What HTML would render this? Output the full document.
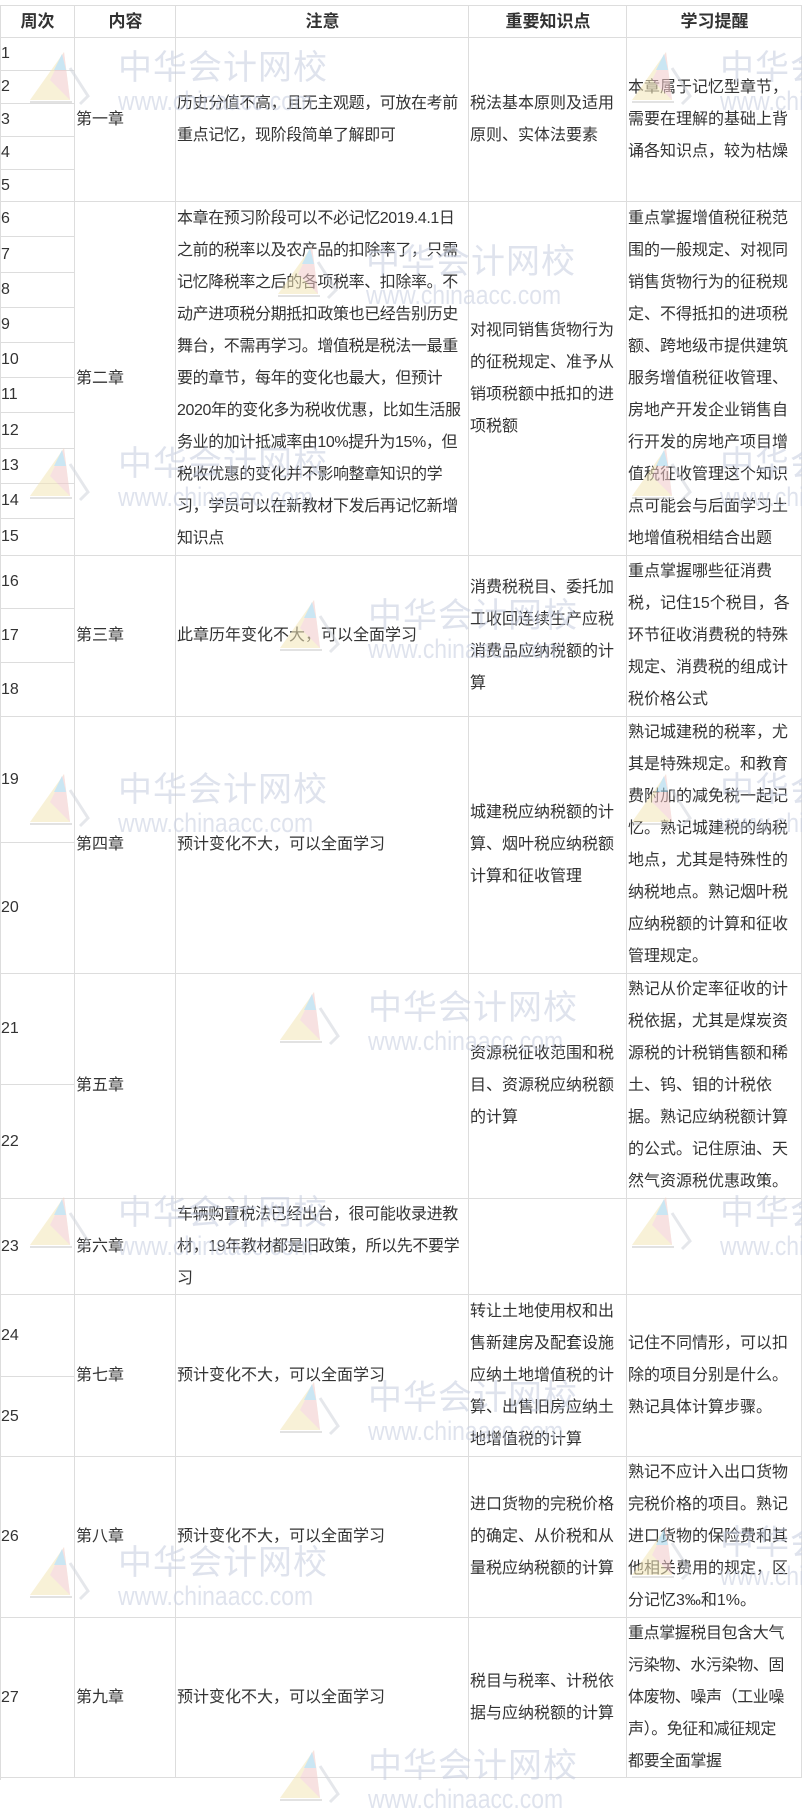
<!DOCTYPE html>
<html><head><meta charset="utf-8"><style>
html,body{margin:0;padding:0;background:#fff;}
body{width:802px;height:1780px;position:relative;overflow:hidden;font-family:"Liberation Sans","Noto Sans CJK SC",sans-serif;color:#333;font-size:16px;}
.c{position:absolute;box-sizing:border-box;border-right:1px solid #ddd;border-bottom:1px solid #ddd;display:flex;align-items:center;line-height:32px;padding-left:1px;}
.h{justify-content:center;font-weight:bold;font-size:17px;}
.t{display:block;}
.nw{white-space:nowrap;letter-spacing:-0.4px;}
.wm{position:absolute;opacity:.55;pointer-events:none;}
.wm .z{position:absolute;left:88px;top:0;font-size:34px;color:#c6cde0;white-space:nowrap;letter-spacing:1px;line-height:36px;}
.wm .u{position:absolute;left:88px;top:36px;font-size:27px;color:#c6cde0;white-space:nowrap;line-height:30px;transform:scaleX(.85);transform-origin:left;}
.wm svg{position:absolute;left:0;top:2px;}
</style></head><body>
<div style="position:absolute;left:0;top:5px;width:802px;height:1px;background:#ddd"></div>
<div style="position:absolute;left:0;top:5px;width:1px;height:1775px;background:#ddd"></div>

<div class="c h" style="left:0;top:6px;width:75px;height:32px">周次</div>
<div class="c h" style="left:75px;top:6px;width:101px;height:32px">内容</div>
<div class="c h" style="left:176px;top:6px;width:293px;height:32px">注意</div>
<div class="c h" style="left:469px;top:6px;width:158px;height:32px">重要知识点</div>
<div class="c h" style="left:627px;top:6px;width:175px;height:32px">学习提醒</div>

<div class="c" style="left:0;top:38px;width:75px;height:33px">1</div>
<div class="c" style="left:0;top:71px;width:75px;height:33px">2</div>
<div class="c" style="left:0;top:104px;width:75px;height:33px">3</div>
<div class="c" style="left:0;top:137px;width:75px;height:33px">4</div>
<div class="c" style="left:0;top:170px;width:75px;height:32px">5</div>
<div class="c" style="left:0;top:202px;width:75px;height:35px">6</div>
<div class="c" style="left:0;top:237px;width:75px;height:36px">7</div>
<div class="c" style="left:0;top:273px;width:75px;height:35px">8</div>
<div class="c" style="left:0;top:308px;width:75px;height:35px">9</div>
<div class="c" style="left:0;top:343px;width:75px;height:35px">10</div>
<div class="c" style="left:0;top:378px;width:75px;height:35px">11</div>
<div class="c" style="left:0;top:413px;width:75px;height:36px">12</div>
<div class="c" style="left:0;top:449px;width:75px;height:35px">13</div>
<div class="c" style="left:0;top:484px;width:75px;height:35px">14</div>
<div class="c" style="left:0;top:519px;width:75px;height:37px">15</div>
<div class="c" style="left:0;top:556px;width:75px;height:53px">16</div>
<div class="c" style="left:0;top:609px;width:75px;height:54px">17</div>
<div class="c" style="left:0;top:663px;width:75px;height:54px">18</div>
<div class="c" style="left:0;top:717px;width:75px;height:126px">19</div>
<div class="c" style="left:0;top:843px;width:75px;height:131px">20</div>
<div class="c" style="left:0;top:974px;width:75px;height:111px">21</div>
<div class="c" style="left:0;top:1085px;width:75px;height:114px">22</div>
<div class="c" style="left:0;top:1199px;width:75px;height:96px">23</div>
<div class="c" style="left:0;top:1295px;width:75px;height:82px">24</div>
<div class="c" style="left:0;top:1377px;width:75px;height:80px">25</div>
<div class="c" style="left:0;top:1457px;width:75px;height:161px">26</div>
<div class="c" style="left:0;top:1618px;width:75px;height:160px">27</div>

<div class="c" style="left:75px;top:38px;width:101px;height:164px">第一章</div>
<div class="c" style="left:176px;top:38px;width:293px;height:164px"><span class="t nw">历史分值不高，且无主观题，可放在考前<br>重点记忆，现阶段简单了解即可</span></div>
<div class="c" style="left:469px;top:38px;width:158px;height:164px"><span class="t">税法基本原则及适用原则、实体法要素</span></div>
<div class="c" style="left:627px;top:38px;width:175px;height:164px"><span class="t">本章属于记忆型章节，需要在理解的基础上背诵各知识点，较为枯燥</span></div>

<div class="c" style="left:75px;top:202px;width:101px;height:354px">第二章</div>
<div class="c" style="left:176px;top:202px;width:293px;height:354px"><span class="t nw">本章在预习阶段可以不必记忆2019.4.1日<br>之前的税率以及农产品的扣除率了，只需<br>记忆降税率之后的各项税率、扣除率。不<br>动产进项税分期抵扣政策也已经告别历史<br>舞台，不需再学习。增值税是税法一最重<br>要的章节，每年的变化也最大，但预计<br>2020年的变化多为税收优惠，比如生活服<br>务业的加计抵减率由10%提升为15%，但<br>税收优惠的变化并不影响整章知识的学<br>习，学员可以在新教材下发后再记忆新增<br>知识点</span></div>
<div class="c" style="left:469px;top:202px;width:158px;height:354px"><span class="t">对视同销售货物行为的征税规定、准予从销项税额中抵扣的进项税额</span></div>
<div class="c" style="left:627px;top:202px;width:175px;height:354px"><span class="t">重点掌握增值税征税范围的一般规定、对视同销售货物行为的征税规定、不得抵扣的进项税额、跨地级市提供建筑服务增值税征收管理、房地产开发企业销售自行开发的房地产项目增值税征收管理这个知识点可能会与后面学习土地增值税相结合出题</span></div>

<div class="c" style="left:75px;top:556px;width:101px;height:161px">第三章</div>
<div class="c" style="left:176px;top:556px;width:293px;height:161px">此章历年变化不大，可以全面学习</div>
<div class="c" style="left:469px;top:556px;width:158px;height:161px"><span class="t">消费税税目、委托加工收回连续生产应税消费品应纳税额的计算</span></div>
<div class="c" style="left:627px;top:556px;width:175px;height:161px"><span class="t">重点掌握哪些征消费税，记住15个税目，各环节征收消费税的特殊规定、消费税的组成计税价格公式</span></div>

<div class="c" style="left:75px;top:717px;width:101px;height:257px">第四章</div>
<div class="c" style="left:176px;top:717px;width:293px;height:257px">预计变化不大，可以全面学习</div>
<div class="c" style="left:469px;top:717px;width:158px;height:257px"><span class="t">城建税应纳税额的计算、烟叶税应纳税额计算和征收管理</span></div>
<div class="c" style="left:627px;top:717px;width:175px;height:257px"><span class="t">熟记城建税的税率，尤其是特殊规定。和教育费附加的减免税一起记忆。熟记城建税的纳税地点，尤其是特殊性的纳税地点。熟记烟叶税应纳税额的计算和征收管理规定。</span></div>

<div class="c" style="left:75px;top:974px;width:101px;height:225px">第五章</div>
<div class="c" style="left:176px;top:974px;width:293px;height:225px"></div>
<div class="c" style="left:469px;top:974px;width:158px;height:225px"><span class="t">资源税征收范围和税目、资源税应纳税额的计算</span></div>
<div class="c" style="left:627px;top:974px;width:175px;height:225px"><span class="t">熟记从价定率征收的计税依据，尤其是煤炭资源税的计税销售额和稀土、钨、钼的计税依据。熟记应纳税额计算的公式。记住原油、天然气资源税优惠政策。</span></div>

<div class="c" style="left:75px;top:1199px;width:101px;height:96px">第六章</div>
<div class="c" style="left:176px;top:1199px;width:293px;height:96px"><span class="t nw">车辆购置税法已经出台，很可能收录进教<br>材，19年教材都是旧政策，所以先不要学<br>习</span></div>
<div class="c" style="left:469px;top:1199px;width:158px;height:96px"></div>
<div class="c" style="left:627px;top:1199px;width:175px;height:96px"></div>

<div class="c" style="left:75px;top:1295px;width:101px;height:162px">第七章</div>
<div class="c" style="left:176px;top:1295px;width:293px;height:162px">预计变化不大，可以全面学习</div>
<div class="c" style="left:469px;top:1295px;width:158px;height:162px"><span class="t">转让土地使用权和出售新建房及配套设施应纳土地增值税的计算、出售旧房应纳土地增值税的计算</span></div>
<div class="c" style="left:627px;top:1295px;width:175px;height:162px"><span class="t">记住不同情形，可以扣除的项目分别是什么。熟记具体计算步骤。</span></div>

<div class="c" style="left:75px;top:1457px;width:101px;height:161px">第八章</div>
<div class="c" style="left:176px;top:1457px;width:293px;height:161px">预计变化不大，可以全面学习</div>
<div class="c" style="left:469px;top:1457px;width:158px;height:161px"><span class="t">进口货物的完税价格的确定、从价税和从量税应纳税额的计算</span></div>
<div class="c" style="left:627px;top:1457px;width:175px;height:161px"><span class="t">熟记不应计入出口货物完税价格的项目。熟记进口货物的保险费和其他相关费用的规定，区分记忆3‰和1%。</span></div>

<div class="c" style="left:75px;top:1618px;width:101px;height:160px">第九章</div>
<div class="c" style="left:176px;top:1618px;width:293px;height:160px">预计变化不大，可以全面学习</div>
<div class="c" style="left:469px;top:1618px;width:158px;height:160px"><span class="t">税目与税率、计税依据与应纳税额的计算</span></div>
<div class="c" style="left:627px;top:1618px;width:175px;height:160px"><span class="t nw">重点掌握税目包含大气<br>污染物、水污染物、固<br>体废物、噪声（工业噪<br>声）。免征和减征规定<br>都要全面掌握</span></div>

<svg width="0" height="0" style="position:absolute"><defs>
<g id="lg"><polygon points="34,0 0,48 40,48" fill="#f3e6b8"/><polygon points="34,0 20,28 40,48" fill="#f2c9c9"/><polygon points="32,2 24,18 36,18" fill="#9fd3ea"/><path d="M40,16 L58,44 L50,52" stroke="#d0d4dc" stroke-width="3" fill="none"/><line x1="0" y1="50" x2="42" y2="50" stroke="#ccc" stroke-width="2"/></g>
</defs></svg>
<div class="wm" style="left:30px;top:50px"><svg width="70" height="60"><use href="#lg"/></svg><div class="z">中华会计网校</div><div class="u">www.chinaacc.com</div></div>
<div class="wm" style="left:632px;top:50px"><svg width="70" height="60"><use href="#lg"/></svg><div class="z">中华会计网校</div><div class="u">www.chinaacc.com</div></div>
<div class="wm" style="left:278px;top:244px"><svg width="70" height="60"><use href="#lg"/></svg><div class="z">中华会计网校</div><div class="u">www.chinaacc.com</div></div>
<div class="wm" style="left:30px;top:446px"><svg width="70" height="60"><use href="#lg"/></svg><div class="z">中华会计网校</div><div class="u">www.chinaacc.com</div></div>
<div class="wm" style="left:632px;top:446px"><svg width="70" height="60"><use href="#lg"/></svg><div class="z">中华会计网校</div><div class="u">www.chinaacc.com</div></div>
<div class="wm" style="left:280px;top:598px"><svg width="70" height="60"><use href="#lg"/></svg><div class="z">中华会计网校</div><div class="u">www.chinaacc.com</div></div>
<div class="wm" style="left:30px;top:772px"><svg width="70" height="60"><use href="#lg"/></svg><div class="z">中华会计网校</div><div class="u">www.chinaacc.com</div></div>
<div class="wm" style="left:632px;top:772px"><svg width="70" height="60"><use href="#lg"/></svg><div class="z">中华会计网校</div><div class="u">www.chinaacc.com</div></div>
<div class="wm" style="left:280px;top:990px"><svg width="70" height="60"><use href="#lg"/></svg><div class="z">中华会计网校</div><div class="u">www.chinaacc.com</div></div>
<div class="wm" style="left:30px;top:1195px"><svg width="70" height="60"><use href="#lg"/></svg><div class="z">中华会计网校</div><div class="u">www.chinaacc.com</div></div>
<div class="wm" style="left:632px;top:1195px"><svg width="70" height="60"><use href="#lg"/></svg><div class="z">中华会计网校</div><div class="u">www.chinaacc.com</div></div>
<div class="wm" style="left:280px;top:1380px"><svg width="70" height="60"><use href="#lg"/></svg><div class="z">中华会计网校</div><div class="u">www.chinaacc.com</div></div>
<div class="wm" style="left:30px;top:1545px"><svg width="70" height="60"><use href="#lg"/></svg><div class="z">中华会计网校</div><div class="u">www.chinaacc.com</div></div>
<div class="wm" style="left:632px;top:1525px"><svg width="70" height="60"><use href="#lg"/></svg><div class="z">中华会计网校</div><div class="u">www.chinaacc.com</div></div>
<div class="wm" style="left:280px;top:1748px"><svg width="70" height="60"><use href="#lg"/></svg><div class="z">中华会计网校</div><div class="u">www.chinaacc.com</div></div>
</body></html>
